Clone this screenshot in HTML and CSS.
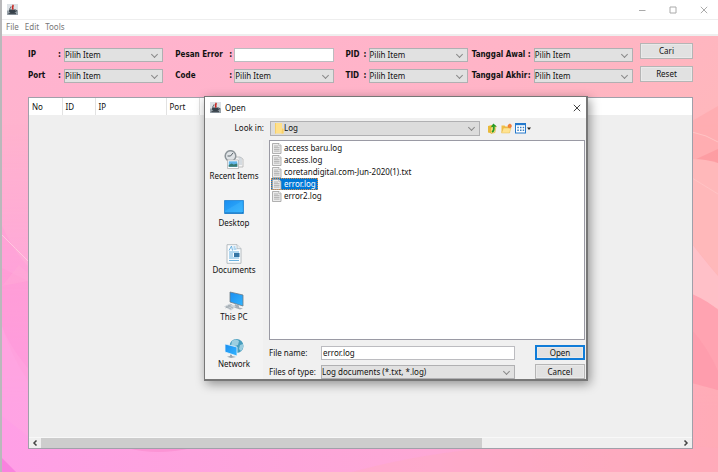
FILE: index.html
```html
<!DOCTYPE html>
<html lang="id">
<head>
<meta charset="utf-8">
<meta name="viewport" content="width=device-width, initial-scale=1">
<title>Log</title>
<link rel="stylesheet" href="styles.css">
</head>
<body>
<svg width="0" height="0" class="defs" aria-hidden="true">
  <defs>
    <linearGradient id="screen" x1="0" y1="0" x2="1" y2="1"><stop offset="0" stop-color="#1a8df0"/><stop offset="1" stop-color="#33b5ff"/></linearGradient>
    <linearGradient id="base" x1="0" y1="0" x2="1" y2="0.65"><stop offset="0" stop-color="#ffb3d0"/><stop offset="0.55" stop-color="#ffb4c6"/><stop offset="1" stop-color="#ffbab3"/></linearGradient>
    <linearGradient id="low" x1="0" y1="0" x2="1" y2="0"><stop offset="0" stop-color="#ff9fe6"/><stop offset="0.6" stop-color="#ffa8d6"/><stop offset="1" stop-color="#ffabb6"/></linearGradient>
    <linearGradient id="fade" x1="0" y1="0" x2="0" y2="1"><stop offset="0.2" stop-color="#000"/><stop offset="0.85" stop-color="#fff"/></linearGradient>
    <mask id="fademask"><rect width="716" height="436" fill="url(#fade)"/></mask>
    <symbol id="java" viewBox="0 0 11 11">
      <rect width="11" height="11" fill="#dde2e6"/><path d="M0 6.500h11V11H0z" fill="#98a2aa"/>
      <path d="M2 5.500h6.500v2l-1 1.500H3.500L2.200 8z" fill="#36414b"/><path d="M8.500 6c1.700-.2 1.500 1.700-.8 1.900M1.500 9.700h7.500" fill="none" stroke="#2f373f"/>
      <path d="M3 5.500C2.500 4 4 3.500 4 2.500" fill="none" stroke="#4c555d"/>
      <path d="M5.500 1c1.800 1-1.500 2.500.7 4.500" fill="none" stroke="#c92a25" stroke-width="1.800"/>
    </symbol>
    <symbol id="file" viewBox="0 0 10 11">
      <path d="M.5.500h6.500l2 2v8h-8.500z" fill="#ececec" stroke="#a0a0a0" stroke-width=".8"/><path d="M6.800.500v2.200H9" fill="#fff" stroke="#999" stroke-width=".6"/>
      <path d="M2 3h4M2 4.700h5.500M2 6.400h5.500M2 8.100h5.500" stroke="#a2a2a2" stroke-width=".8"/>
    </symbol>
  </defs>
</svg>

<div class="window">
  <header class="titlebar">
    <svg class="java"><use href="#java"/></svg>
    <div class="window-buttons">
      <button aria-label="Minimize"><svg viewBox="0 0 8 8"><path d="M1 4.500h6.500"/></svg></button>
      <button aria-label="Maximize"><svg viewBox="0 0 8 8"><path d="M1 1h6v6H1z"/></svg></button>
      <button aria-label="Close"><svg viewBox="0 0 8 8"><path d="M.8.800l6.400 6.400M7.200.800L.8 7.200"/></svg></button>
    </div>
  </header>
  <nav class="menu"><button>File</button><button>Edit</button><button>Tools</button></nav>

  <main class="content">
    <svg class="backdrop" viewBox="0 0 716 436" preserveAspectRatio="none" aria-hidden="true">
      <rect width="716" height="436" fill="url(#base)"/>
      <path d="M0 190Q15 220 26 230V436H0z" fill="#ff9fcb" opacity=".6"/>
      <rect width="716" height="436" fill="url(#low)" mask="url(#fademask)"/>
      <path d="M0 232L26 245V345Q8 318 0 290z" fill="#ff90cf" opacity=".25"/>
      <path d="M0 250L17 229L26 237V245z" fill="#ffb0d8" opacity=".35"/>
      <path d="M0 290Q10 320 60 370L26 400L0 380z" fill="#ffaae2" opacity=".4"/>
      <path d="M0 199Q13 212 28 227" fill="none" stroke="#ffc9df"/>
      <path d="M0 422L14 436H0z" fill="#f982df"/>
      <path d="M125 412Q155 420 190 412z" fill="#fc94d5"/>
      <path d="M350 436Q500 395 716 412V436z" fill="#ffa9bf" opacity=".4"/>
      <path d="M690 85L716 70V154L690 125z" fill="#ffa5a9" opacity=".55"/>
      <path d="M690 125L716 113V127z" fill="#fb929a" opacity=".6"/>
      <path d="M690 123Q704 123 716 127V240L690 208z" fill="#ffb8ba"/>
      <path d="M690 96Q705 99 716 106M690 142L716 158" fill="none" stroke="#ffc3c4"/>
      <path d="M690 208Q704 226 716 240V273L690 258z" fill="#ffc0c8"/>
      <path d="M690 258Q706 265 716 274V354L690 347z" fill="#ffa3b1"/>
      <path d="M690 294Q706 312 716 335V354L690 347z" fill="#fd9aaa" opacity=".6"/>
    </svg>

    <form class="filters">
      <div class="fields">
        <label for="ip">IP</label><b>:</b><span class="combo"><select id="ip"><option>Pilih Item</option></select></span>
        <label for="pesan" class="next">Pesan Error</label><b>:</b><input id="pesan" type="text">
        <label for="pid" class="next">PID</label><b>:</b><span class="combo"><select id="pid"><option>Pilih Item</option></select></span>
        <label for="awal" class="near">Tanggal Awal</label><b>:</b><span class="combo"><select id="awal"><option>Pilih Item</option></select></span>
        <label for="port">Port</label><b>:</b><span class="combo"><select id="port"><option>Pilih Item</option></select></span>
        <label for="code" class="next">Code</label><b>:</b><span class="combo"><select id="code"><option>Pilih Item</option></select></span>
        <label for="tid" class="next">TID</label><b>:</b><span class="combo"><select id="tid"><option>Pilih Item</option></select></span>
        <label for="akhir" class="near">Tanggal Akhir</label><b>:</b><span class="combo"><select id="akhir"><option>Pilih Item</option></select></span>
      </div>
      <div class="actions"><button type="button" class="btn">Cari</button><button type="button" class="btn">Reset</button></div>
    </form>

    <section class="grid-panel">
      <table class="log">
        <thead><tr><th class="w-s">No</th><th class="w-s">ID</th><th class="w-l">IP</th><th class="w-s">Port</th><th></th></tr></thead>
      </table>
      <div class="scrollbar">
        <button aria-label="Scroll left"><svg viewBox="0 0 6 6"><path d="M4.500.500L2 3l2.500 2.500"/></svg></button>
        <div class="track"><div class="thumb"></div></div>
        <button aria-label="Scroll right"><svg viewBox="0 0 6 6"><path d="M1.500.500L4 3 1.500 5.500"/></svg></button>
      </div>
    </section>
  </main>

  <div class="dialog" role="dialog" aria-labelledby="dialog-title">
    <header class="dialog-title">
      <svg class="java"><use href="#java"/></svg><h1 id="dialog-title">Open</h1>
      <button aria-label="Close"><svg viewBox="0 0 8 8"><path d="M.8.800l6.400 6.400M7.200.800L.8 7.200"/></svg></button>
    </header>
    <div class="look">
      <label for="look">Look in:</label>
      <span class="combo folder-combo">
        <svg class="folder" viewBox="0 0 10 12"><path d="M1 1h7v5l1.500 1v4.500H1z" fill="#ffe08a"/><path d="M1 1h1v10.500H1z" fill="#f6cf69"/><path d="M8 6.500l1.500.5v4.500H7.500z" fill="#f7cf67"/></svg>
        <select id="look"><option>Log</option></select>
      </span>
      <div class="tools">
        <button aria-label="Up one level"><svg viewBox="0 0 11 11"><path d="M1 3l4-1v8.500l-4-1z" fill="#e8b93a"/><path d="M4 4l5-1-1 6.500-4 1z" fill="#ffe28a" stroke="#d8a82f" stroke-width=".5"/><path d="M5 9c2-1 2-3 1.800-5" fill="none" stroke="#249b25" stroke-width="1.800"/><path d="M3.800 4.300L6.300.500l3.500 3z" fill="#249b25"/></svg></button>
        <button aria-label="New folder"><svg viewBox="0 0 11 11"><path d="M.5 2.500h3l1 1h4v6h-8z" fill="#f0bd46"/><path d="M2.500 5H10L8.500 10h-8z" fill="#ffe391" stroke="#e0b040" stroke-width=".4"/><circle cx="8.800" cy="3" r="1.900" fill="#f0612d"/><path d="M8.800.500v5M6.300 3h4.500" stroke="#f4a13a" stroke-width=".7"/></svg></button>
        <button aria-label="View" class="view"><svg viewBox="0 0 16 11"><rect x=".5" y=".5" width="10" height="9.500" fill="#fff" stroke="#2479cc"/><path d="M0 1.200h11" stroke="#2479cc" stroke-width="2"/><path d="M2.300 4.500h7M2.300 7.300h7" stroke="#397dbd" stroke-width="1.400" stroke-dasharray="1.500 1.200"/><path d="M12 4.500h4l-2 2.500z" fill="#222"/></svg></button>
      </div>
    </div>
    <div class="dialog-main">
      <nav class="places">
        <button><svg viewBox="0 0 20 20"><path d="M8 7h8l3 2v8H8z" fill="#f4f4f4" stroke="#aaa" stroke-width=".7"/><path d="M14.500 8h3M15 10h3M15 12h3M15 14h3" stroke="#b6c2cc"/><circle cx="6.500" cy="6" r="5.300" fill="#dfe3e6" stroke="#8c9499" stroke-width="1.500"/><path d="M9 3L6.500 6H3.500" fill="none" stroke="#596269"/><path d="M3.500 10h11v8.500h-11z" fill="#fff" stroke="#aaa" stroke-width=".7"/><path d="M4.700 11.300h8.600v5.500H4.700z" fill="#63b5e8"/><path d="M4.700 15l3-1.500 2 1 3.600-1v3.300H4.700z" fill="#397a70"/></svg>Recent Items</button>
        <button><svg viewBox="0 0 20 20"><path d="M.5 3.500h19v13H.5z" fill="url(#screen)" stroke="#1278ca" stroke-width=".7"/><path d="M1 15.800h18" stroke="#0e65b4"/><path d="M1 14L18 4v12H1z" fill="#51c0ff" opacity=".3"/></svg>Desktop</button>
        <button><svg viewBox="0 0 20 20"><path d="M3 .700h10l4 4v14.600H3z" fill="#fbfdff" stroke="#a6adb3" stroke-width=".8"/><path d="M13 .700v4h4" fill="#e9eef2" stroke="#a6adb3" stroke-width=".7"/><path d="M5 6.500L7.500 2l1 4.500M9.500 3h2M9.500 5h3M5 8h10M5 10h4M5 12h4M5 14h10M5 16.500h10" fill="none" stroke="#5aa9dc" stroke-width=".9"/><path d="M10 9h5.500v4H10z" fill="#3776a6"/></svg>Documents</button>
        <button><svg viewBox="0 0 20 20"><path d="M6 1l13 3v11L6 11z" fill="url(#screen)" stroke="#6d7b87" stroke-width=".8"/><path d="M11 13l4 1.500v2l4 1-3 1-6-2z" fill="#a6afb7"/><path d="M0 15.500l6-3 6 3-5 4z" fill="#cdd3d8"/><path d="M2 15.500l5 2.500M4 14.500l5 2.500M1.500 17l6-3.500" stroke="#8e989f" stroke-width=".6"/></svg>This PC</button>
        <button><svg viewBox="0 0 20 20"><circle cx="12.500" cy="8" r="7" fill="#479dbd"/><path d="M8 3q4-3 7 0l-1 4-3 1-1 3-3-3zM16 7l3-1q1 4-2 7l-2-2z" fill="#9bcee0"/><path d="M1 6l12 3v9L1 14z" fill="url(#screen)" stroke="#e6f3fa" stroke-width=".8"/><path d="M6 16.500l2 .6v1l4 1-5 .9-4-1.300 3-.8z" fill="#9ba7b0"/></svg>Network</button>
      </nav>
      <div class="right">
        <ul class="files">
          <li><svg><use href="#file"/></svg><span>access baru.log</span></li>
          <li><svg><use href="#file"/></svg><span>access.log</span></li>
          <li><svg><use href="#file"/></svg><span>coretandigital.com-Jun-2020(1).txt</span></li>
          <li class="selected"><svg><use href="#file"/></svg><span>error.log</span></li>
          <li><svg><use href="#file"/></svg><span>error2.log</span></li>
        </ul>
        <div class="file-form">
          <label for="name">File name:</label><input id="name" type="text" value="error.log"><button class="btn primary">Open</button>
          <label for="type">Files of type:</label><span class="combo"><select id="type"><option>Log documents (*.txt, *.log)</option></select></span><button class="btn">Cancel</button>
        </div>
      </div>
    </div>
  </div>
</div>
</body>
</html>
```
FILE: styles.css
```css
* { box-sizing: border-box; }
:root { --bold: "DejaVu Sans Condensed", "DejaVu Sans", sans-serif; --segoe: "Noto Sans", "Open Sans", sans-serif; }
body { margin: 0; font: 8px/12px "Noto Sans", "Open Sans", sans-serif; color: #111; }
button, input, select { font: inherit; color: inherit; }
button { padding: 0; border: 0; background: none; }
svg { display: block; }
.defs { position: absolute; }

.window { position: relative; display: flex; flex-direction: column; min-height: 100vh; border-left: 2px solid #b9b9bb; background: #fff; }
.titlebar { display: flex; align-items: center; justify-content: space-between; height: 20px; padding: 0 10px 0 5px; border-bottom: 1px solid #eee; }
.java { width: 11px; height: 11px; }
.window-buttons { display: flex; gap: 23px; }
.window-buttons svg, .dialog-title button svg { width: 8px; height: 8px; fill: none; stroke: #aaa; }
.menu { display: flex; gap: 6px; height: 16px; padding: 0 4px; border-bottom: 2px solid #eee; font: 8px/14px var(--segoe); color: #777; }

.content { position: relative; z-index: 0; flex: 1; display: flex; flex-direction: column; padding: 7px 25px 23px 26px; }
.backdrop { position: absolute; z-index: -1; inset: 0; width: 100%; height: 100%; }

.filters { display: flex; gap: 7px; height: 54px; }
.fields { flex: 1; display: grid; grid-template-columns: 30px 6px 1fr 66px 5px 1fr 30px 5px 1fr 60px 6px 1fr; grid-auto-rows: 15px; row-gap: 6px; align-items: center; padding-top: 4px; align-content: start; }
.fields label, .fields b { font: bold 8px/12px var(--bold); white-space: nowrap; }
.fields .next { padding-left: 12px; }
.fields .near { padding-left: 4px; }
.actions { display: flex; flex-direction: column; gap: 7px; width: 53px; }
.btn { height: 16px; border: 1px solid #b5b5b5; background: #e1e1e1; box-shadow: inset 0 0 0 1px #e9e9e9; text-align: center; }
.primary { border: 2px solid #0f7cd8; }

.combo { position: relative; display: flex; align-items: center; height: 14px; min-width: 0; border: 1px solid #b0b0b2; background: #e1e1e1; }
.combo select { flex: 1; min-width: 0; height: 100%; padding: 0 14px 0 0; border: 0; background: none; appearance: none; }
.combo::after { content: ""; position: absolute; right: 5px; top: 3px; width: 4px; height: 4px; border: solid #888; border-width: 0 1px 1px 0; transform: rotate(45deg); pointer-events: none; }
input { width: 100%; min-width: 0; height: 14px; padding: 0 1px; border: 1px solid #bcbcc0; border-radius: 0; background: #fff; }

.grid-panel { flex: 1; display: flex; flex-direction: column; justify-content: space-between; border: 1px solid #a0a0aa; background: #efefef; }
.log { width: 100%; border-collapse: collapse; table-layout: fixed; background: #fff; }
.log th { height: 17px; padding: 0 3px; border-right: 1px solid #e2e2e2; text-align: left; font-weight: normal; }
.log th:last-child { border: 0; }
.w-s { width: 33px; }
.w-l { width: 71px; }
.scrollbar { display: flex; height: 11px; border-top: 1px solid #f8f8f8; }
.scrollbar button { display: grid; place-items: center; width: 12px; }
.scrollbar svg { width: 6px; height: 6px; fill: none; stroke: #444; stroke-width: 1.5; }
.track { flex: 1; }
.thumb { width: 69%; height: 100%; background: #cdcdcd; }

.dialog { position: absolute; left: 202px; top: 96px; width: 384px; border: 1px solid #777; border-right-width: 2px; border-bottom-width: 2px; background: #f0f0f0; box-shadow: 2px 3px 10px rgba(0, 0, 0, .4); }
.dialog-title { display: flex; align-items: center; height: 21px; padding: 0 5px; background: #fff; }
.dialog-title h1 { flex: 1; margin: 0 0 0 4px; font: 8px/12px var(--segoe); }
.dialog-title button svg { stroke: #444; }
.look { display: flex; align-items: center; height: 20px; }
.look label { width: 59px; text-align: right; }
.folder-combo { width: 210px; height: 15px; margin-left: 6px; padding-left: 3px; background: #dcdcdc; }
.folder { width: 10px; height: 12px; }
.tools { display: flex; gap: 3px; margin-left: 7px; }
.tools svg { width: 11px; height: 11px; }
.tools .view svg { width: 16px; }
.dialog-main { display: flex; padding-top: 2px; }
.places { display: flex; flex-direction: column; gap: 15px; width: 58px; padding-top: 10px; background: #f3f3f3; }
.places button { display: flex; flex-direction: column; align-items: center; height: 32px; white-space: nowrap; }
.places svg { flex: none; width: 20px; height: 20px; }
.right { flex: 1; display: flex; flex-direction: column; gap: 5px; margin-left: 6px; }
.files { height: 200px; margin: 0 1px 0 0; padding: 1px; border: 1px solid #9a9aa4; background: #fff; list-style: none; font: 8px/12px var(--segoe); }
.files li { display: flex; align-items: center; gap: 2px; width: max-content; height: 12px; padding: 0 2px 0 1px; }
.files svg { width: 10px; height: 11px; }
.files .selected { background: #0078d7; color: #fff; outline: 1px dotted #d58b45; outline-offset: -1px; }
.file-form { display: grid; grid-template-columns: 52px 1fr 50px; row-gap: 4px; align-items: center; padding-right: 1px; }
.file-form .btn { height: 15px; }
.file-form input, .file-form .combo { width: auto; margin-right: 20px; }
```
